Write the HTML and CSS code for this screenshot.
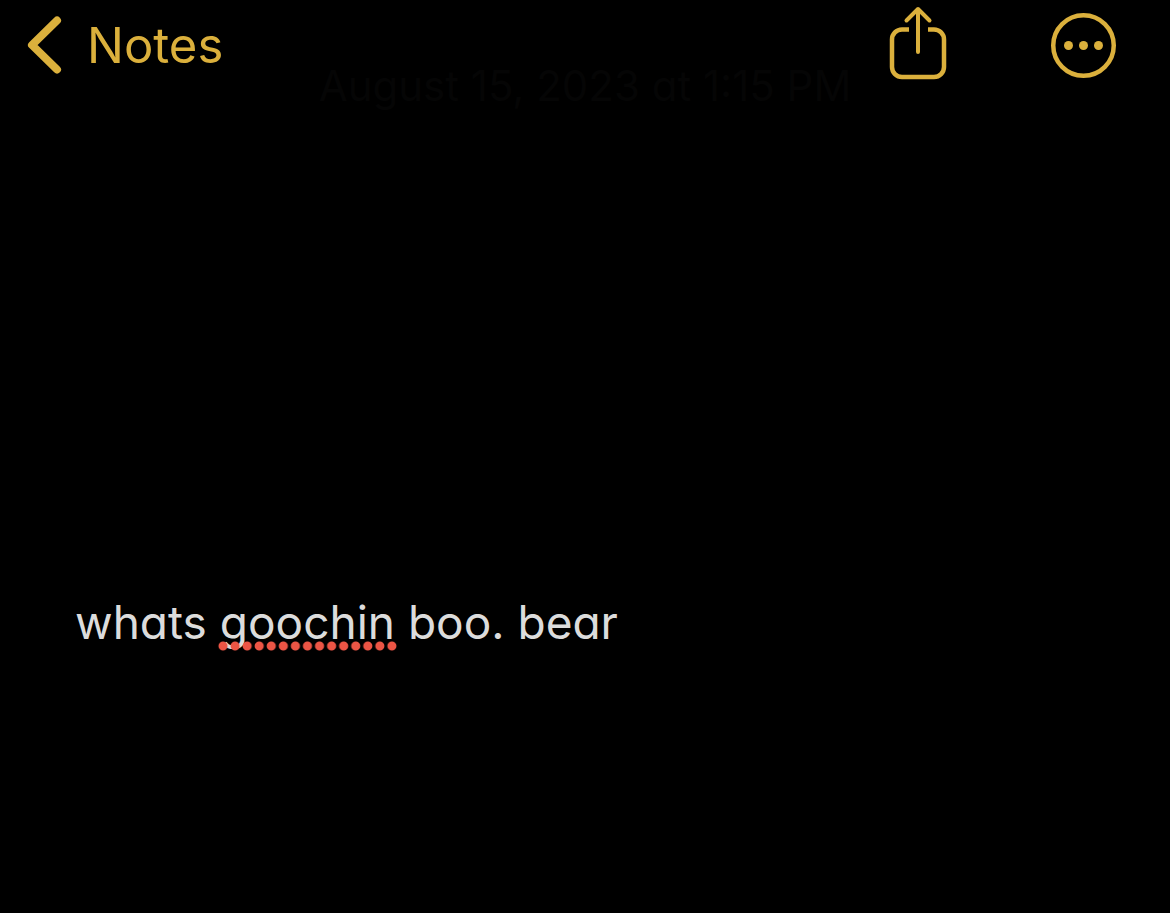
FILE: index.html
```html
<!DOCTYPE html>
<html lang="en">

<head>
    <meta charset="UTF-8">
    <meta name="viewport" content="width=device-width, initial-scale=1.0">
    <title>Notes</title>
    <link rel="stylesheet" href="styles.css">
</head>

<body>
    <header class="toolbar">
        <a class="back" href="#">
            <svg width="36" height="60" viewBox="0 0 36 60" aria-hidden="true">
                <path d="M31 5.5 L6 30 L31 54.5" />
            </svg>
            <span>Notes</span>
        </a>
        <div class="actions">
            <button type="button" aria-label="Share">
                <svg width="58" height="78" viewBox="0 0 58 78" aria-hidden="true">
                    <path d="M20 23.5 H13 A10 10 0 0 0 3 33.5 V61 A10 10 0 0 0 13 71 H45 A10 10 0 0 0 55 61 V33.5 A10 10 0 0 0 45 23.5 H39" />
                    <path class="arrow" d="M29 46 V3 M17.500 14.500 L29 3 L40.500 14.500" />
                </svg>
            </button>
            <button type="button" aria-label="More">
                <svg width="66" height="66" viewBox="0 0 66 66" aria-hidden="true">
                    <circle cx="33.500" cy="33.500" r="30.250" />
                    <circle class="dot" cx="18.500" cy="33.500" r="4.500" />
                    <circle class="dot" cx="33.500" cy="33.500" r="4.500" />
                    <circle class="dot" cx="48.500" cy="33.500" r="4.500" />
                </svg>
            </button>
        </div>
    </header>

    <main class="note">
        <p class="date">August 15, 2023 at 1:15 PM</p>
        <div class="text" contenteditable="true" spellcheck="false" role="textbox" aria-label="Note text">whats <span class="misspelled">goochin</span> boo. bear</div>
    </main>
</body>

</html>
```

FILE: styles.css
```css
* {
    box-sizing: border-box;
}

body {
    margin: 0;
    min-height: 100vh;
    background-color: #000;
    color: #dcdcdc;
    font-family: Inter, "Liberation Sans", sans-serif;
}

/* stays on top while the note scrolls under it */
.toolbar {
    position: fixed;
    top: 0;
    left: 0;
    right: 0;
    z-index: 1;
    height: 90px;
    padding: 0 54px 0 26px;
    display: flex;
    align-items: center;
    justify-content: space-between;
    color: #dbb03c;
}

.back {
    display: flex;
    align-items: center;
    gap: 25px;
    color: inherit;
    font-size: 49px;
    line-height: 60px;
    text-decoration: none;
}

.back span {
    padding-top: 2px;
}

.actions {
    display: flex;
    align-items: center;
    gap: 103px;
}

.actions button {
    padding: 0;
    border: none;
    background: none;
    color: inherit;
    cursor: pointer;
}

.toolbar svg {
    display: block;
    fill: none;
    stroke: currentColor;
    stroke-width: 4.5;
}

.toolbar .back svg {
    stroke-width: 8;
    stroke-linecap: round;
    stroke-linejoin: round;
}

.toolbar .arrow {
    stroke-width: 4;
    stroke-linecap: round;
    stroke-linejoin: round;
}

.toolbar .dot {
    fill: currentColor;
    stroke: none;
}

.note {
    padding: 62px 75px 0;
    /* single-storey a */
    font-feature-settings: "cv11";
}

.date {
    margin: 0;
    color: #050505;
    font-size: 42px;
    line-height: 48px;
    text-align: center;
}

.text {
    margin-top: 482px;
    font-size: 46px;
    line-height: 60px;
    outline: none;
}

.misspelled {
    position: relative;
}

/* spelling dots, drawn over the descenders */
.misspelled::after {
    content: "";
    position: absolute;
    left: -3px;
    right: -3px;
    bottom: -1px;
    height: 10px;
    background: radial-gradient(circle at center, #ec5545 4px, transparent 5px) left center / 12px 10px round;
    pointer-events: none;
}
```
